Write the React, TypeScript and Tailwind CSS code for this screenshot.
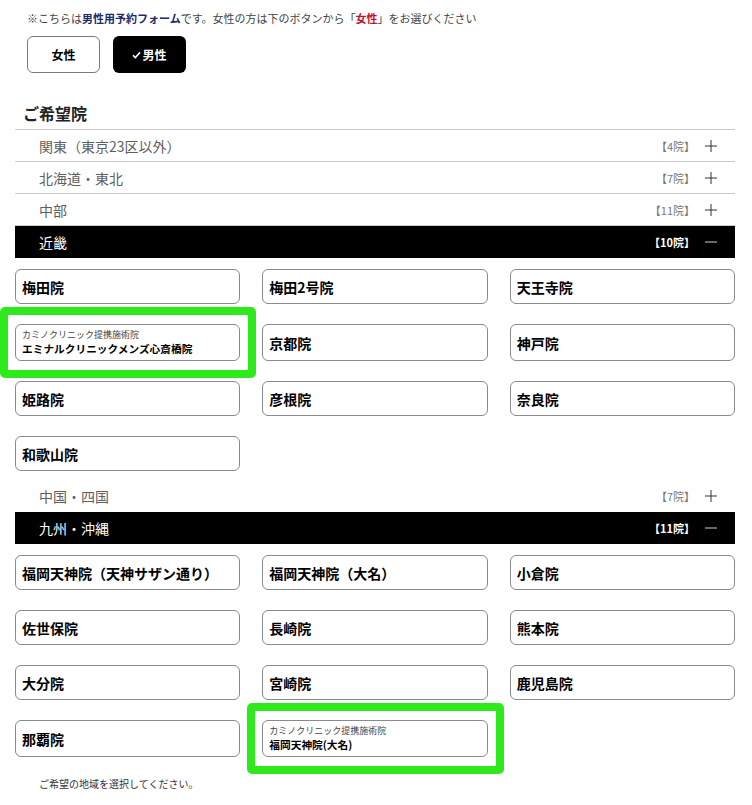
type Clinic = { name: string; partner?: boolean; mark?: boolean }

const kinki: Clinic[] = [
    { name: "梅田院" },
    { name: "梅田2号院" },
    { name: "天王寺院" },
    { name: "エミナルクリニックメンズ心斎橋院", partner: true, mark: true },
    { name: "京都院" },
    { name: "神戸院" },
    { name: "姫路院" },
    { name: "彦根院" },
    { name: "奈良院" },
    { name: "和歌山院" },
]

const kyushu: Clinic[] = [
    { name: "福岡天神院（天神サザン通り）" },
    { name: "福岡天神院（大名）" },
    { name: "小倉院" },
    { name: "佐世保院" },
    { name: "長崎院" },
    { name: "熊本院" },
    { name: "大分院" },
    { name: "宮崎院" },
    { name: "鹿児島院" },
    { name: "那覇院" },
    { name: "福岡天神院(大名)", partner: true, mark: true },
]

function Plus() {
    return (
        <svg width="12" height="12" viewBox="0 0 12 12" className="shrink-0">
            <path d="M6 0V12M0 6H12" stroke="#333" strokeWidth="1" />
        </svg>
    )
}

function Minus() {
    return (
        <svg width="12" height="12" viewBox="0 0 12 12" className="shrink-0">
            <path d="M0 6H12" stroke="#cfcfcf" strokeWidth="1" />
        </svg>
    )
}

function ClosedRow({ label, count, border = true }: { label: string; count: string; border?: boolean }) {
    return (
        <div className={`h-[32px] flex items-center justify-between pl-[24px] pr-[18px] ${border ? "border-b border-[#cccccc]" : ""}`}>
            <span className="text-[14px] leading-[20px] text-[#5f5f5f]">{label}</span>
            <div className="flex items-center gap-[10px]">
                <span className="text-[11px] leading-[16px] text-[#777]">【{count}】</span>
                <Plus />
            </div>
        </div>
    )
}

function OpenRow({ label, count }: { label: string; count: string }) {
    return (
        <div className="h-[32px] flex items-center justify-between pl-[24px] pr-[18px] bg-black">
            <span className="text-[14px] leading-[20px] text-white">{label}</span>
            <div className="flex items-center gap-[10px]">
                <span className="text-[11px] leading-[16px] font-bold text-white">【{count}】</span>
                <Minus />
            </div>
        </div>
    )
}

function ClinicButton({ c }: { c: Clinic }) {
    return (
        <div className="relative">
            <div className={`h-full border border-[#8a8a8a] rounded-[6px] bg-white pl-[6px] pr-2 flex flex-col justify-center ${c.partner ? "min-h-[37px] py-[4px]" : "min-h-[35px]"}`}>
                {c.partner ? (
                    <>
                        <span className="text-[9px] leading-[12px] text-[#444]">カミノクリニック提携施術院</span>
                        <span className="text-[10.7px] leading-[15px] font-bold text-black">{c.name}</span>
                    </>
                ) : (
                    <span className="text-[14px] leading-[20px] font-bold text-black">{c.name}</span>
                )}
            </div>
            {c.mark && (
                <div className="absolute -left-[15px] -right-[16px] -top-[17px] -bottom-[17px] border-[8px] border-[#2eea1c] rounded-[5px] pointer-events-none" />
            )}
        </div>
    )
}

function ClinicGrid({ items, bottom }: { items: Clinic[]; bottom: string }) {
    return (
        <div className={`grid grid-cols-3 gap-x-[22px] gap-y-[20px] pt-[11px] ${bottom}`}>
            {items.map((c, i) => (
                <ClinicButton key={i} c={c} />
            ))}
        </div>
    )
}

export default function App() {
    return (
        <div className="w-[752px] min-h-[805px] bg-white pt-[10px] font-['Noto_Sans_CJK_JP','Noto_Sans',sans-serif] text-[#333]">
            <p className="ml-[27px] text-[11px] leading-[16px] text-[#444]">
                ※こちらは<span className="font-bold text-[#1b2a6b]">男性用予約フォーム</span>です。女性の方は下のボタンから「<span className="font-bold text-[#c8102e]">女性</span>」をお選びください
            </p>

            <div className="ml-[27px] mt-[10px] flex gap-[13px]">
                <button className="w-[73px] h-[37px] rounded-[6px] border border-[#7a7a7a] bg-white text-[12px] font-bold text-black">
                    女性
                </button>
                <button className="w-[73px] h-[37px] rounded-[6px] bg-black text-[12px] font-bold text-white flex items-center justify-center gap-[1px]">
                    <svg width="9" height="8" viewBox="0 0 9 8">
                        <path d="M1 4.2L3.4 6.6L8 1.4" stroke="white" strokeWidth="1.6" fill="none" />
                    </svg>
                    男性
                </button>
            </div>

            <h2 className="ml-[23px] mt-[29px] text-[16px] leading-[22px] font-bold text-[#222]">ご希望院</h2>

            <div className="ml-[15px] w-[720px] mt-[5px] border-t border-[#cccccc]">
                <ClosedRow label="関東（東京23区以外）" count="4院" />
                <ClosedRow label="北海道・東北" count="7院" />
                <ClosedRow label="中部" count="11院" />
                <OpenRow label="近畿" count="10院" />
                <ClinicGrid items={kinki} bottom="pb-[9px]" />
                <ClosedRow label="中国・四国" count="7院" border={false} />
                <OpenRow label="九州・沖縄" count="11院" />
                <ClinicGrid items={kyushu} bottom="pb-0" />
            </div>

            <p className="ml-[39px] mt-[20px] pb-[10px] text-[10px] leading-[14px] text-[#333]">ご希望の地域を選択してください。</p>
        </div>
    )
}
